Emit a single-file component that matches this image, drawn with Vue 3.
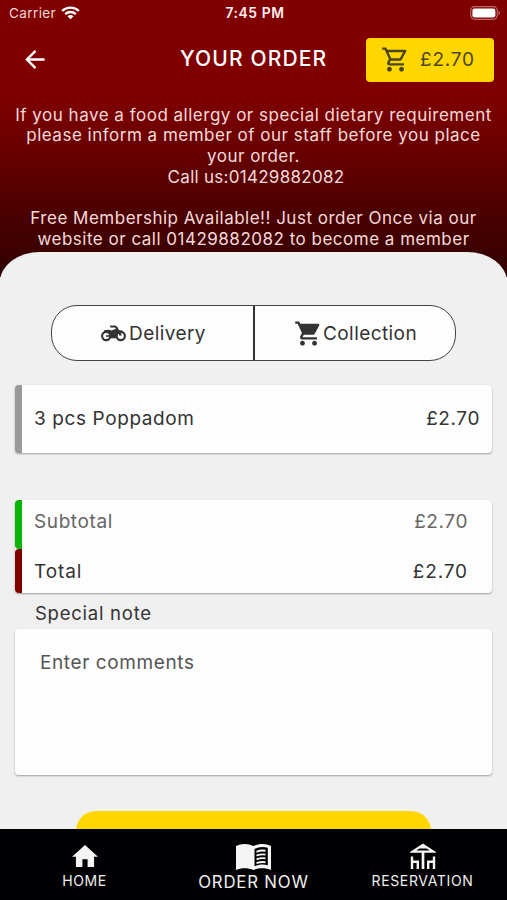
<script setup>
const totals = [
  { label: 'Subtotal', value: '£2.70', kind: 'subtotal' },
  { label: 'Total', value: '£2.70', kind: 'total' },
]
</script>

<template>
  <div class="screen">
    <header class="top">
      <div class="status">
        <div class="carrier">
          <span>Carrier</span>
          <svg class="wifi" viewBox="0 0 20 14">
            <path d="M1.2 4.9C6 .2 14 .2 18.8 4.9M4.4 8.2c3.2-3 8-3 11.2 0" fill="none" stroke="#fff" stroke-width="2.5" />
            <path d="M6.8 10.3c1.9-1.6 4.5-1.6 6.4 0L10 13.6z" fill="#fff" />
          </svg>
        </div>
        <span class="clock">7:45 PM</span>
        <svg class="battery" viewBox="0 0 31 14">
          <rect x=".7" y=".7" width="26.6" height="12.6" rx="4" fill="none" stroke="#b96868" stroke-width="1.2" />
          <rect x="2.4" y="2.4" width="23" height="9.2" rx="2.3" fill="#fff" />
          <path d="M28.6 4.8c2 .8 2 3.6 0 4.4z" fill="#b96868" />
        </svg>
      </div>

      <div class="titlebar">
        <svg class="back" viewBox="0 0 22 22">
          <path d="M20.5 11H2.2M11 2L2 11l9 9" fill="none" stroke="#fff" stroke-width="2.5" />
        </svg>
        <h1>YOUR ORDER</h1>
        <div class="basket">
          <svg viewBox="0 0 24 24">
            <path d="M15.55 13c.75 0 1.41-.41 1.75-1.03l3.58-6.49A.996.996 0 0 0 20.01 4H5.21l-.94-2H1v2h2l3.6 7.59-1.35 2.44C4.52 15.37 5.48 17 7 17h12v-2H7l1.1-2h7.45zM6.16 6h12.15l-2.76 5H8.53L6.16 6zM7 18c-1.1 0-1.99.9-1.99 2S5.9 22 7 22s2-.9 2-2-.9-2-2-2zm10 0c-1.1 0-1.99.9-1.99 2s.89 2 1.99 2 2-.9 2-2-.9-2-2-2z" />
          </svg>
          <span>£2.70</span>
        </div>
      </div>

      <div class="notice">
        <p class="n1">If you have a food allergy or special dietary requirement</p>
        <p class="n2">please inform a member of our staff before you place</p>
        <p class="n3">your order.</p>
        <p class="n4">Call us:01429882082</p>
        <p class="n5">Free Membership Available!! Just order Once via our</p>
        <p class="n6">website or call 01429882082 to become a member</p>
      </div>
      <div class="curve"></div>
    </header>

    <main>
      <div class="switch">
        <div class="option">
          <svg class="bike" viewBox="0 0 25 17">
            <g fill="none" stroke="#333">
              <circle cx="5.2" cy="11" r="4.100" stroke-width="2.100" />
              <circle cx="19.8" cy="11" r="4.100" stroke-width="2.100" />
              <path d="M9.200 1.500h4.600q1 0 1.600 1l4.400 8" stroke-width="2.200" />
            </g>
            <path d="M3 5.300Q8 4 10.500 5.500L15 3.800l3 1.400 3.500.2v1.400c-3.800.2-5.600 2.600-6 6.400H10c.2-3.600-2.300-6.200-7-6.400z" fill="#333" />
            <path d="M5 11h7" stroke="#333" stroke-width="1.600" />
          </svg>
          <span class="delivery">Delivery</span>
        </div>
        <div class="option">
          <svg class="cart" viewBox="0 0 24 24">
            <path d="M7 18c-1.1 0-1.99.9-1.99 2S5.9 22 7 22s2-.9 2-2-.9-2-2-2zM1 2v2h2l3.6 7.59-1.35 2.45c-.16.28-.25.61-.25.96 0 1.1.9 2 2 2h12v-2H7.42c-.14 0-.25-.11-.25-.25l.03-.12.9-1.63h7.45c.75 0 1.41-.41 1.75-1.03l3.58-6.49A1 1 0 0 0 20 4H5.21l-.94-2H1zm16 16c-1.1 0-1.99.9-1.99 2s.89 2 1.99 2 2-.9 2-2-.9-2-2-2z" />
          </svg>
          <span class="collection">Collection</span>
        </div>
      </div>

      <section class="card item">
        <span class="name">3 pcs Poppadom</span>
        <span class="price">£2.70</span>
      </section>

      <section class="card totals">
        <div v-for="t in totals" :key="t.kind" class="row" :class="t.kind">
          <span class="label">{{ t.label }}</span>
          <span class="price">{{ t.value }}</span>
        </div>
      </section>

      <h2>Special note</h2>
      <section class="card comments"><span>Enter comments</span></section>
      <div class="checkout"></div>
    </main>

    <nav>
      <div class="tab">
        <svg class="home" viewBox="2 3 20 17"><path d="M10 20v-6h4v6h5v-8h3L12 3 2 12h3v8z" /></svg>
        <span class="t-home">HOME</span>
      </div>
      <div class="tab order">
        <svg class="book" viewBox="0 0 35 28">
          <path d="M0 3C5 .2 12 .2 17.500 3 23 .2 30 .2 35 3v24C30 24.800 23 24.800 17.500 27 12 24.800 5 24.800 0 27z" />
          <path d="M18.500 6c4-2.200 8.800-2.600 13.300-1.200v17.400c-4.200-1.200-9-.8-13.300 1z" fill="#000" />
          <path d="M20.500 8.800c3-1.200 6-1.500 9-1M20.500 12.600c3-1.200 6-1.500 9-1M20.500 16.400c3-1.200 6-1.500 9-1M20.500 20.200c3-1.200 6-1.500 9-1" fill="none" stroke="#f5f5f5" stroke-width="1.900" />
        </svg>
        <span class="t-order">ORDER NOW</span>
      </div>
      <div class="tab">
        <svg class="table" viewBox="0 0 26 27">
          <path d="M13 1.800L23.500 8.700h-21z" fill="none" stroke="#f5f5f5" stroke-width="2.200" />
          <path d="M13 8v18" fill="none" stroke="#f5f5f5" stroke-width="2.700" />
          <path d="M13 2l4 3.500H9z" />
          <path d="M2 13.500V26M2 18.800h5.800V26M24 13.500V26M24 18.800h-5.800V26" fill="none" stroke="#f5f5f5" stroke-width="2.400" />
        </svg>
        <span class="t-res">RESERVATION</span>
      </div>
    </nav>
  </div>
</template>

<style>
body {
  background: #f0f0f0;
}
</style>

<style scoped>
.screen {
  display: flex;
  flex-direction: column;
  width: 507px;
  height: 900px;
  overflow: hidden;
  background: #f0f0f0;
  color: #333;
  font-family: Inter, "Open Sans", sans-serif;
  white-space: nowrap;
}
h1, h2, p {
  margin: 0;
  font-weight: 400;
}
.top {
  display: flex;
  flex-direction: column;
  flex: none;
  height: 277px;
  overflow: hidden;
  background: linear-gradient(#800000 0, #800000 95px, #300000 277px);
  color: #fff;
}
.status {
  display: grid;
  grid-template-columns: 1fr auto 1fr;
  align-items: center;
  height: 26px;
  flex: none;
  padding: 0 6px 0 9px;
  font-size: 13.500px;
}
.carrier {
  display: flex;
  align-items: center;
  gap: 5px;
  letter-spacing: .4px;
  color: #f0d5d5;
}
.wifi { width: 19px; height: 14px; }
.clock {
  font-weight: 600;
  font-size: 13.800px;
  letter-spacing: .6px;
  color: #fff0f0;
}
.battery { width: 31px; height: 14px; justify-self: end; }
.titlebar {
  display: grid;
  grid-template-columns: 155px 1fr 128px;
  align-items: center;
  flex: none;
  height: 67px;
  padding: 0 13px 0 25px;
}
.back { width: 21px; height: 21px; }
h1 {
  padding-bottom: 3px;
  font-size: 21px;
  font-weight: 450;
  letter-spacing: 1.150px;
}
.basket {
  display: flex;
  align-items: center;
  gap: 10px;
  box-sizing: border-box;
  height: 44px;
  padding-left: 15px;
  border-radius: 4px;
  background: #fed700;
  color: #4b4420;
  font-size: 19px;
  letter-spacing: .8px;
}
.basket svg { width: 29px; height: 29px; fill: #4b4420; }
.notice {
  flex: none;
  height: 159px;
  box-sizing: border-box;
  padding-top: 11.500px;
  color: #f5dada;
  font-size: 17px;
  line-height: 20.800px;
  letter-spacing: .5px;
  text-align: center;
}
.n4 { letter-spacing: .28px; padding-left: 5px; }
.n5 { margin-top: 20.800px; }
.curve {
  flex: none;
  height: 34px;
  border-radius: 40px 40px 0 0 / 30px 30px 0 0;
  background: #f0f0f0;
}
main {
  flex: none;
  height: 552px;
  box-sizing: border-box;
  overflow: hidden;
  padding: 28px 15px 0;
}
.switch {
  display: grid;
  grid-template-columns: 203px 1fr;
  width: 405px;
  height: 56px;
  box-sizing: border-box;
  margin: 0 0 24px 36px;
  border: 1px solid #444;
  border-radius: 26px;
  background: #fdfdfd;
}
.option {
  display: flex;
  align-items: center;
  font-size: 19px;
  letter-spacing: .42px;
}
.option:first-child {
  box-sizing: border-box;
  padding-left: 49px;
  border-right: 2px solid #333;
}
.option:last-child { padding-left: 39px; }
.bike { width: 25px; height: 17px; margin-right: 3px; }
.cart { width: 29px; height: 29px; margin-right: 0; fill: #333; }
.card {
  box-sizing: border-box;
  width: 477px;
  border-radius: 4px;
  background: #fdfdfd;
  box-shadow: 0 1px 2px rgba(0, 0, 0, .35);
  font-size: 19px;
  letter-spacing: .6px;
}
.item {
  display: flex;
  align-items: center;
  justify-content: space-between;
  height: 68px;
  padding: 0 12px 1px 12px;
  border-left: 7px solid #999;
}
.totals {
  margin-top: 47px;
  height: 93px;
}
.row {
  display: flex;
  align-items: center;
  justify-content: space-between;
  box-sizing: border-box;
  padding: 0 24px 0 12px;
  border-radius: 4px 0 0 4px;
}
.subtotal {
  height: 49px;
  padding-bottom: 6px;
  border-left: 7px solid #0ab50a;
  color: #666;
}
.total {
  height: 44px;
  border-left: 7px solid #800000;
  letter-spacing: .9px;
}
h2 {
  margin: 8px 0 0 20px;
  height: 28px;
  line-height: 24px;
  font-size: 18.500px;
  letter-spacing: .75px;
}
.comments {
  height: 146px;
  padding: 22px 25px;
  color: #555;
}
.checkout {
  width: 355px;
  height: 40px;
  margin: 36px auto 0;
  border-radius: 20px;
  background: #fed700;
}
nav {
  display: grid;
  grid-template-columns: repeat(3, 1fr);
  flex: none;
  height: 71px;
  background: #010103;
  color: #eee;
  fill: #f5f5f5;
}
.tab {
  display: flex;
  flex-direction: column;
  align-items: center;
  padding-top: 14px;
  font-size: 14px;
}
.home { width: 26px; height: 22px; margin: 2px 0 5px; }
.book { width: 35px; height: 28px; }
.table { width: 26px; height: 27px; margin-bottom: 2px; }
.t-home { letter-spacing: .6px; }
.t-order {
  font-size: 16.800px;
  line-height: 22px;
  letter-spacing: .8px;
}
.t-res { letter-spacing: .65px; }
</style>
